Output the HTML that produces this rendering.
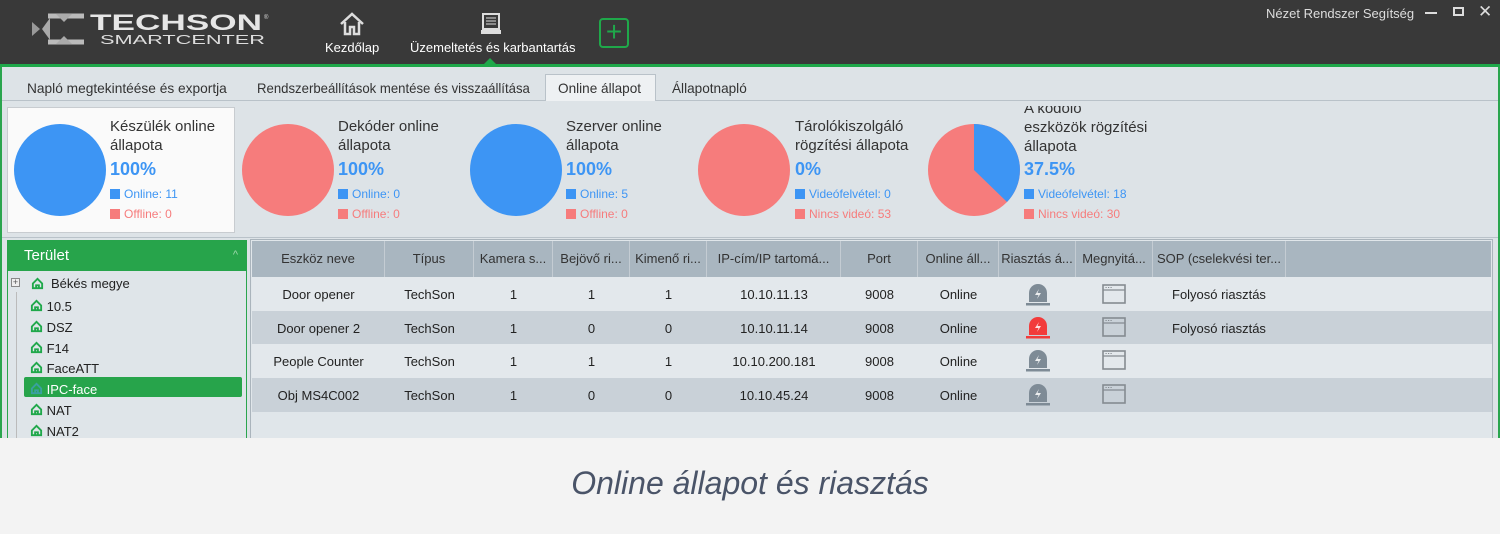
<!DOCTYPE html>
<html><head><meta charset="utf-8"><style>
*{margin:0;padding:0;box-sizing:border-box}
body{width:1500px;height:534px;background:#f3f3f3;font-family:"Liberation Sans",sans-serif;position:relative;overflow:hidden;color:#333}
.a{position:absolute}
.hdr{left:0;top:0;width:1500px;height:65px;background:#393939}
.gl{left:0;top:64px;width:1500px;height:3px;background:#1fa84a}
.app{left:0;top:67px;width:1500px;height:371px;background:#dde3e7;border-left:2px solid #2aa54e;border-right:2px solid #2aa54e}
.nav{color:#fff;font-size:13px}
.tab{font-size:14px;color:#333;top:80px;white-space:nowrap;transform-origin:0 0}
.t15{font-size:15px;color:#333;line-height:19px}
.pct{font-size:18px;font-weight:bold;color:#3d95f4}
.lg{font-size:12px}
.sq{display:inline-block;width:10px;height:10px;vertical-align:-1px;margin-right:4px}
.th{top:241px;height:36px;background:#a9b6c0;font-size:13px;color:#333;line-height:36px;text-align:center;border-right:1px solid #c4ccd3;white-space:nowrap;overflow:hidden}
.row{left:252px;width:1240px;height:33.5px}
.c{font-size:13px;color:#222;text-align:center;position:absolute}
</style></head><body>
<div class="a hdr"></div>
<div class="a gl"></div>
<!-- logo -->
<svg class="a" style="left:28px;top:10px" width="250" height="40" viewBox="0 0 250 40">
<path d="M20 6 L56 6 M20 32 L56 32" stroke="#bbb" stroke-width="5"/>
<path d="M14 19 L22 8 L22 30 Z" fill="#aaa"/><path d="M4 12 L4 26 L12 19Z" fill="#999"/>
<path d="M28 4 L36 12 L44 4Z M28 34 L36 26 L44 34Z" fill="#aaa"/>
<text x="62" y="20" font-family="Liberation Sans" font-size="22" font-weight="bold" fill="#e6e6e6" textLength="172" lengthAdjust="spacingAndGlyphs">TECHSON</text>
<text x="236" y="9" font-family="Liberation Sans" font-size="6" fill="#ddd">®</text>
<text x="72" y="34" font-family="Liberation Sans" font-size="13" fill="#ddd" textLength="165" lengthAdjust="spacingAndGlyphs">SMARTCENTER</text>
</svg>
<svg class="a" style="left:339px;top:12px" width="26" height="24"><path d="M2 12 L13 2 L24 12 M6 10 V22 H11 V15 H15 V22 H20 V10" fill="none" stroke="#ddd" stroke-width="2.5"/></svg>
<div class="a nav" style="left:325px;top:40px">Kezdőlap</div>
<svg class="a" style="left:479px;top:12px" width="24" height="24"><rect x="4" y="2" width="16" height="15" fill="none" stroke="#ddd" stroke-width="2"/><path d="M7 6h10M7 9h10M7 12h10" stroke="#ddd"/><rect x="2" y="18" width="20" height="4" fill="#ddd"/></svg>
<div class="a nav" style="left:410px;top:40px">Üzemeltetés és karbantartás</div>
<div class="a" style="left:483px;top:58px;width:0;height:0;border-left:7px solid transparent;border-right:7px solid transparent;border-bottom:7px solid #1fa84a"></div>
<div class="a" style="left:599px;top:18px;width:30px;height:30px;border:2px solid #1fa84a;border-radius:4px;color:#1fa84a;font-size:28px;line-height:24px;text-align:center">+</div>
<div class="a" style="left:1266px;top:6px;color:#ddd;font-size:13px">Nézet Rendszer Segítség</div>
<div class="a" style="left:1425px;top:12px;width:12px;height:2px;background:#ddd"></div>
<div class="a" style="left:1453px;top:7px;width:11px;height:9px;border:2px solid #ddd"></div>
<div class="a" style="left:1478px;top:2px;color:#ddd;font-size:17px">✕</div>

<div class="a app"></div>
<div class="a" style="left:2px;top:100px;width:1496px;height:1px;background:#b9c2c9"></div>
<div class="a" style="left:545px;top:74px;width:111px;height:27px;background:#eef1f3;border:1px solid #b9c2c9;border-bottom:none"></div>
<div class="a tab" style="left:27px;transform:scaleX(0.98)">Napló megtekintéése és exportja</div>
<div class="a tab" style="left:257px;transform:scaleX(0.94)">Rendszerbeállítások mentése és visszaállítása</div>
<div class="a tab" style="left:558px;transform:scaleX(0.97)">Online állapot</div>
<div class="a tab" style="left:672px;transform:scaleX(0.97)">Állapotnapló</div>

<div class="a" style="left:7px;top:107px;width:228px;height:126px;background:#fafafa;border:1px solid #c8ccd0"></div>
<div class="a" style="left:2px;top:237px;width:1496px;height:1px;background:#b9c2c9"></div>

<!-- pies -->
<svg class="a" style="left:0;top:100px" width="1100" height="140">
<circle cx="60" cy="70" r="46" fill="#3d95f4"/>
<circle cx="288" cy="70" r="46" fill="#f67c7c"/>
<circle cx="516" cy="70" r="46" fill="#3d95f4"/>
<circle cx="744" cy="70" r="46" fill="#f67c7c"/>
<circle cx="974" cy="70" r="46" fill="#f67c7c"/>
<path d="M974 70 L974 24 A46 46 0 0 1 1007 102 Z" fill="#3d95f4"/>
</svg>
<div class="a t15" style="left:110px;top:117px">Készülék online<br>állapota</div>
<div class="a pct" style="left:110px;top:159px">100%</div>
<div class="a lg" style="left:110px;top:187px;color:#3d95f4"><span class="sq" style="background:#3d95f4"></span>Online: 11</div>
<div class="a lg" style="left:110px;top:207px;color:#f67c7c"><span class="sq" style="background:#f67c7c"></span>Offline: 0</div>

<div class="a t15" style="left:338px;top:117px">Dekóder online<br>állapota</div>
<div class="a pct" style="left:338px;top:159px">100%</div>
<div class="a lg" style="left:338px;top:187px;color:#3d95f4"><span class="sq" style="background:#3d95f4"></span>Online: 0</div>
<div class="a lg" style="left:338px;top:207px;color:#f67c7c"><span class="sq" style="background:#f67c7c"></span>Offline: 0</div>

<div class="a t15" style="left:566px;top:117px">Szerver online<br>állapota</div>
<div class="a pct" style="left:566px;top:159px">100%</div>
<div class="a lg" style="left:566px;top:187px;color:#3d95f4"><span class="sq" style="background:#3d95f4"></span>Online: 5</div>
<div class="a lg" style="left:566px;top:207px;color:#f67c7c"><span class="sq" style="background:#f67c7c"></span>Offline: 0</div>

<div class="a t15" style="left:795px;top:117px">Tárolókiszolgáló<br>rögzítési állapota</div>
<div class="a pct" style="left:795px;top:159px">0%</div>
<div class="a lg" style="left:795px;top:187px;color:#3d95f4"><span class="sq" style="background:#3d95f4"></span>Videófelvétel: 0</div>
<div class="a lg" style="left:795px;top:207px;color:#f67c7c"><span class="sq" style="background:#f67c7c"></span>Nincs videó: 53</div>

<div class="a t15" style="left:1024px;top:106px;height:48px;overflow:hidden"><div style="margin-top:-7px">A kódoló<br>eszközök rögzítési<br>állapota</div></div>
<div class="a pct" style="left:1024px;top:159px">37.5%</div>
<div class="a lg" style="left:1024px;top:187px;color:#3d95f4"><span class="sq" style="background:#3d95f4"></span>Videófelvétel: 18</div>
<div class="a lg" style="left:1024px;top:207px;color:#f67c7c"><span class="sq" style="background:#f67c7c"></span>Nincs videó: 30</div>

<!-- left tree -->
<div class="a" style="left:7px;top:240px;width:240px;height:198px;border:1px solid #2aa54e;border-bottom:none;background:#dfe5e9"></div>
<div class="a" style="left:7px;top:240px;width:240px;height:31px;background:#27a44b;color:#fff;font-size:15px;line-height:31px;padding-left:17px">Terület<span style="position:absolute;right:9px;top:0;font-size:11px;color:#9fd8ae">^</span></div>
<div class="a" style="left:16px;top:292px;width:1px;height:146px;background:#bbb"></div>
<div class="a" style="left:24px;top:377px;width:218px;height:20px;background:#27a44b;border-radius:2px"></div>
<div class="a" style="left:11px;top:278px;width:9px;height:9px;border:1px solid #888;font-size:9px;line-height:7px;text-align:center;color:#555;background:#eee">+</div>
<svg width="0" height="0" style="position:absolute"><defs><symbol id="h" viewBox="0 0 14 14"><path d="M2 7 L7 2 L12 7 V12 H2 Z M5.5 12 V9 H8.5 V12" fill="none" stroke="currentColor" stroke-width="2"/></symbol></defs></svg>
<svg class="a" style="left:31px;top:277px;color:#1fa84a" width="13" height="13"><use href="#h"/></svg>
<div class="a" style="left:51px;top:276px;font-size:13px;color:#222">Békés megye</div>
<div class="a" style="left:30px;top:297px;font-size:13px;color:#222;line-height:20.8px">
<div><svg width="13" height="13" style="color:#1fa84a;vertical-align:-1px"><use href="#h"/></svg> 10.5</div>
<div><svg width="13" height="13" style="color:#1fa84a;vertical-align:-1px"><use href="#h"/></svg> DSZ</div>
<div><svg width="13" height="13" style="color:#1fa84a;vertical-align:-1px"><use href="#h"/></svg> F14</div>
<div><svg width="13" height="13" style="color:#1fa84a;vertical-align:-1px"><use href="#h"/></svg> FaceATT</div>
<div style="color:#fff"><svg width="13" height="13" style="color:#3aa0a0;vertical-align:-1px"><use href="#h"/></svg> IPC-face</div>
<div><svg width="13" height="13" style="color:#1fa84a;vertical-align:-1px"><use href="#h"/></svg> NAT</div>
<div><svg width="13" height="13" style="color:#1fa84a;vertical-align:-1px"><use href="#h"/></svg> NAT2</div>
</div>

<!-- table -->
<div class="a" style="left:250px;top:239px;width:1243px;height:199px;border:1px solid #aab4bc;border-bottom:none;background:#e0e6ea"></div>
<div class="a th" style="left:252px;width:133px">Eszköz neve</div>
<div class="a th" style="left:385px;width:89px">Típus</div>
<div class="a th" style="left:474px;width:79px">Kamera s...</div>
<div class="a th" style="left:553px;width:77px">Bejövő ri...</div>
<div class="a th" style="left:630px;width:77px">Kimenő ri...</div>
<div class="a th" style="left:707px;width:134px">IP-cím/IP tartomá...</div>
<div class="a th" style="left:841px;width:77px">Port</div>
<div class="a th" style="left:918px;width:81px">Online áll...</div>
<div class="a th" style="left:999px;width:77px">Riasztás á...</div>
<div class="a th" style="left:1076px;width:77px">Megnyitá...</div>
<div class="a th" style="left:1153px;width:133px;text-align:left;padding-left:4px">SOP (cselekvési ter...</div>
<div class="a th" style="left:1286px;width:205px;border:none"></div>

<div class="a row" style="top:277px;background:#e3e8ec"></div>
<div class="a row" style="top:311px;background:#c9d1d8"></div>
<div class="a row" style="top:344px;background:#e3e8ec"></div>
<div class="a row" style="top:378px;background:#c9d1d8"></div>

<svg width="0" height="0" style="position:absolute"><defs>
<symbol id="al" viewBox="0 0 26 22"><path d="M4 18 V9 A9 9 0 0 1 22 9 V18 Z" fill="currentColor"/><rect x="1" y="19" width="24" height="2.5" fill="currentColor"/><path d="M14 5 L10 11 H13.5 L12 15 L16 9 H12.5 Z" fill="#fff" opacity=".85"/></symbol>
<symbol id="wn" viewBox="0 0 24 20"><rect x="1" y="1" width="22" height="18" fill="none" stroke="#858b91" stroke-width="1.6"/><path d="M1 6 H23" stroke="#858b91" stroke-width="1.3"/><path d="M3.5 3.5h1.2M6 3.5h1.2M8.5 3.5h1.2" stroke="#858b91"/></symbol>
</defs></svg>

<div class="a" style="left:252px;top:277px;width:1240px">
 <div class="c" style="left:0;width:133px;top:10px">Door opener</div>
 <div class="c" style="left:133px;width:89px;top:10px">TechSon</div>
 <div class="c" style="left:222px;width:79px;top:10px">1</div>
 <div class="c" style="left:301px;width:77px;top:10px">1</div>
 <div class="c" style="left:378px;width:77px;top:10px">1</div>
 <div class="c" style="left:455px;width:134px;top:10px">10.10.11.13</div>
 <div class="c" style="left:589px;width:77px;top:10px">9008</div>
 <div class="c" style="left:666px;width:81px;top:10px">Online</div>
 <svg class="a" style="left:773px;top:7px;color:#7e8b96" width="26" height="22"><use href="#al"/></svg>
 <svg class="a" style="left:850px;top:7px" width="24" height="20"><use href="#wn"/></svg>
 <div class="c" style="left:920px;top:10px">Folyosó riasztás</div>
</div>
<div class="a" style="left:252px;top:311px;width:1240px">
 <div class="c" style="left:0;width:133px;top:10px">Door opener 2</div>
 <div class="c" style="left:133px;width:89px;top:10px">TechSon</div>
 <div class="c" style="left:222px;width:79px;top:10px">1</div>
 <div class="c" style="left:301px;width:77px;top:10px">0</div>
 <div class="c" style="left:378px;width:77px;top:10px">0</div>
 <div class="c" style="left:455px;width:134px;top:10px">10.10.11.14</div>
 <div class="c" style="left:589px;width:77px;top:10px">9008</div>
 <div class="c" style="left:666px;width:81px;top:10px">Online</div>
 <svg class="a" style="left:773px;top:6px;color:#f23b3b" width="26" height="22"><use href="#al"/></svg>
 <svg class="a" style="left:850px;top:6px" width="24" height="20"><use href="#wn"/></svg>
 <div class="c" style="left:920px;top:10px">Folyosó riasztás</div>
</div>
<div class="a" style="left:252px;top:344px;width:1240px">
 <div class="c" style="left:0;width:133px;top:10px">People Counter</div>
 <div class="c" style="left:133px;width:89px;top:10px">TechSon</div>
 <div class="c" style="left:222px;width:79px;top:10px">1</div>
 <div class="c" style="left:301px;width:77px;top:10px">1</div>
 <div class="c" style="left:378px;width:77px;top:10px">1</div>
 <div class="c" style="left:455px;width:134px;top:10px">10.10.200.181</div>
 <div class="c" style="left:589px;width:77px;top:10px">9008</div>
 <div class="c" style="left:666px;width:81px;top:10px">Online</div>
 <svg class="a" style="left:773px;top:6px;color:#7e8b96" width="26" height="22"><use href="#al"/></svg>
 <svg class="a" style="left:850px;top:6px" width="24" height="20"><use href="#wn"/></svg>
</div>
<div class="a" style="left:252px;top:378px;width:1240px">
 <div class="c" style="left:0;width:133px;top:10px">Obj MS4C002</div>
 <div class="c" style="left:133px;width:89px;top:10px">TechSon</div>
 <div class="c" style="left:222px;width:79px;top:10px">1</div>
 <div class="c" style="left:301px;width:77px;top:10px">0</div>
 <div class="c" style="left:378px;width:77px;top:10px">0</div>
 <div class="c" style="left:455px;width:134px;top:10px">10.10.45.24</div>
 <div class="c" style="left:589px;width:77px;top:10px">9008</div>
 <div class="c" style="left:666px;width:81px;top:10px">Online</div>
 <svg class="a" style="left:773px;top:6px;color:#7e8b96" width="26" height="22"><use href="#al"/></svg>
 <svg class="a" style="left:850px;top:6px" width="24" height="20"><use href="#wn"/></svg>
</div>

<div class="a" style="left:0;top:438px;width:1500px;height:96px;background:#f3f3f3"></div>
<div class="a" style="left:0;top:465px;width:1500px;text-align:center;font-size:32px;font-style:italic;color:#4a5468">Online állapot és riasztás</div>
</body></html>
